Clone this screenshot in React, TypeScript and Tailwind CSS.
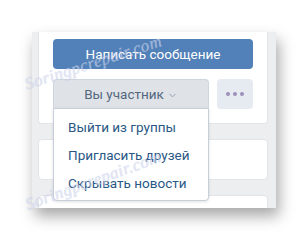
import { ChevronDown } from 'lucide-react';

function Watermark({ className }: { className: string }) {
  return (
    <div
      className={`pointer-events-none absolute whitespace-nowrap italic text-[17px] tracking-[0.5px] text-[#d3d9ef] opacity-60 [text-shadow:0_0_1px_#a9b4da] ${className}`}
      style={{ fontFamily: '"Liberation Serif", serif' }}
    >
      Soringpcrepair.com
    </div>
  );
}

export default function App() {
  return (
    <div className="relative w-[308px] h-[241px] bg-white overflow-hidden" style={{ fontFamily: 'Roboto, "Open Sans", sans-serif' }}>
      <div className="ml-[32px] mt-[32px] w-[244px] h-[176px] bg-[#edeef0] pl-[6px] pr-[8px] shadow-[3px_8px_14px_rgba(0,0,0,0.35)] overflow-hidden">
        <div className="relative h-[92px] bg-white rounded-b-[4px] border-x border-b border-[#e3e4e8] px-[14px] pt-[7px]">
          <button className="w-[200px] h-[30px] rounded-[4px] bg-[#5181b8] text-white text-[13.5px] flex items-center justify-center">
            Написать сообщение
          </button>
          <div className="mt-[10px] flex gap-[8px]">
            <div className="relative w-[156px]">
              <div className="h-[29px] rounded-t-[4px] bg-[#dfe3e8] border border-b-0 border-[#cdd5dd] text-[#55677d] text-[13.5px] flex items-center justify-center gap-[3px]">
                Вы участник
                <ChevronDown className="w-[11px] h-[11px] mt-[2px] text-[#8b9ab0]" strokeWidth={2} />
              </div>
            </div>
            <div className="w-[36px] h-[30px] rounded-[4px] bg-[#e5ebf1] flex items-center justify-center gap-[3px]">
              <span className="w-[4px] h-[4px] rounded-full bg-[#9d8fb8]" />
              <span className="w-[4px] h-[4px] rounded-full bg-[#9d8fb8]" />
              <span className="w-[4px] h-[4px] rounded-full bg-[#9d8fb8]" />
            </div>
          </div>
        </div>
        <div className="mt-[15px] h-[41px] bg-white rounded-[4px] border border-[#e3e4e8]" />
        <div className="mt-[15px] h-[20px] bg-white rounded-t-[4px] border border-[#e3e4e8]" />
      </div>

      <div className="absolute left-[53px] top-[108px] w-[156px] h-[93px] bg-white border border-[#c5d0db] rounded-b-[4px] shadow-[0_1px_3px_rgba(0,0,0,0.12)] pt-[4px] pb-[4px]">
        {['Выйти из группы', 'Пригласить друзей', 'Скрывать новости'].map(t => (
          <div key={t} className="h-[28px] flex items-center pl-[14px] text-[13.5px] text-[#2a5885]">
            {t}
          </div>
        ))}
      </div>

      <Watermark className="left-[22px] top-[50px] -rotate-[18deg]" />
      <Watermark className="left-[22px] top-[168px] -rotate-[20deg]" />
    </div>
  );
}
